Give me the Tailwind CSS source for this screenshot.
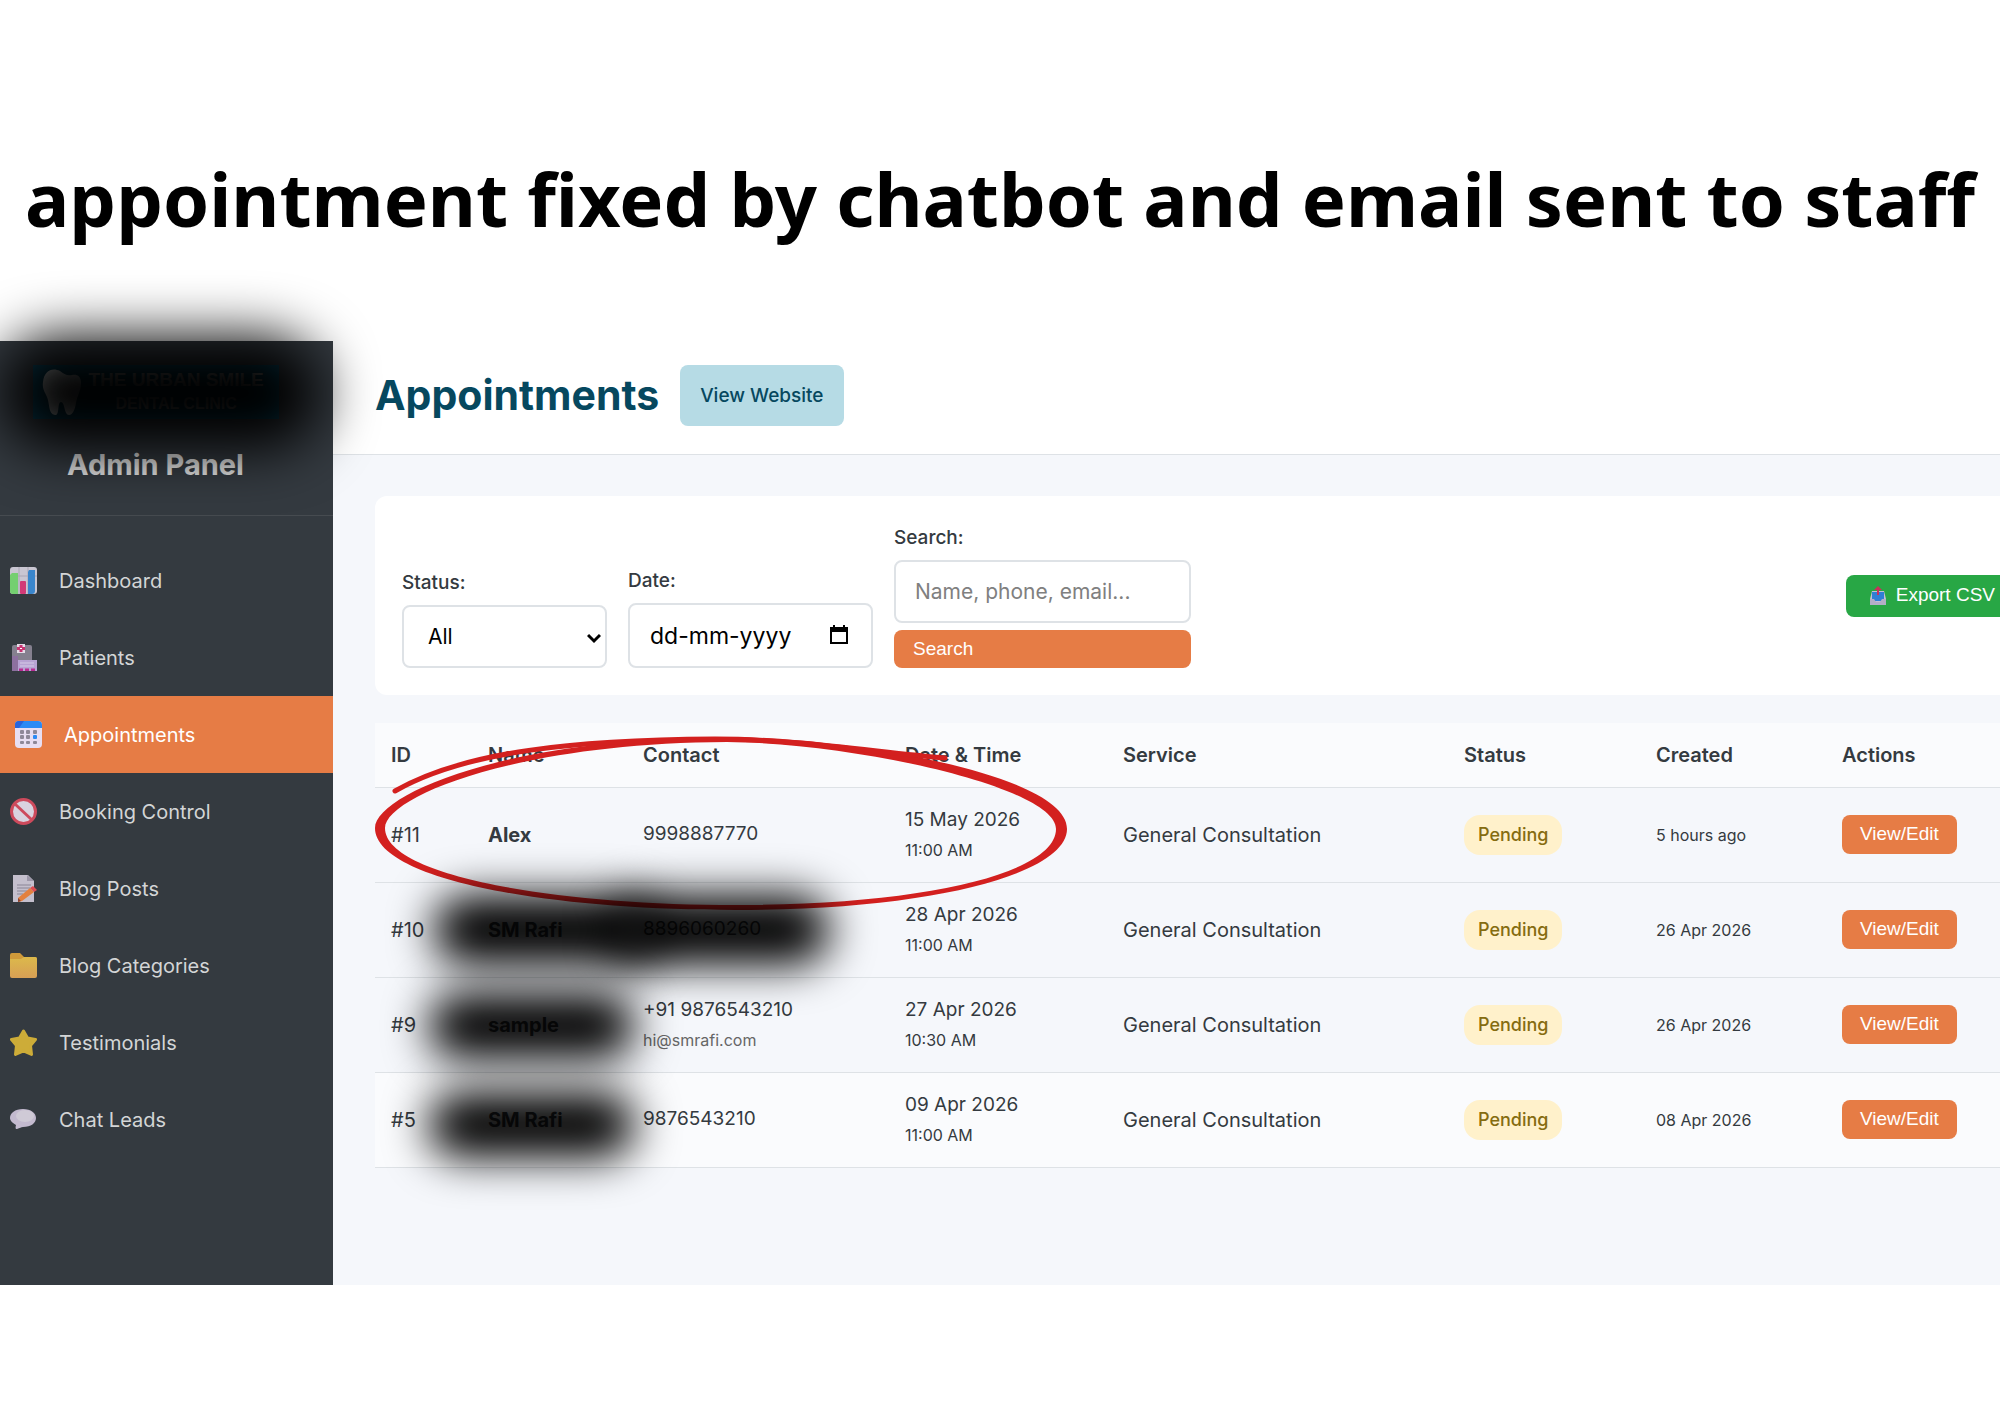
<!DOCTYPE html>
<html lang="en">
<head>
  <meta charset="UTF-8" />
  <meta name="viewport" content="width=device-width, initial-scale=1.0" />
  <title>Admin Panel - Appointments</title>
  <script src="https://cdn.jsdelivr.net/npm/@tailwindcss/browser@4"></script>
</head>
<body class="bg-white font-['Inter',sans-serif] text-xl text-[#343a40] overflow-x-hidden">

  <h1 class="pt-[145px] pb-[88px] text-center text-[74px] leading-[108px] font-bold text-black whitespace-nowrap font-['Noto_Sans',sans-serif]">appointment fixed by chatbot and email sent to staff</h1>

  <div class="relative flex">

    <!-- Sidebar -->
    <aside class="w-[333px] shrink-0 bg-[#343a40] text-[#d3d5d6]">
      <div class="relative h-[175px] pt-6 pr-[22px] border-b border-[#464b50] text-center">
        <div class="mx-auto w-[246px] h-[54px] bg-[#0a4a63] flex items-center gap-2 pl-2 text-[#a8a8a8]">
          <svg class="w-10 h-12" viewBox="0 0 40 48" fill="#dfe6e8">
            <path d="M2 14C3 3 11-1 19 3c4 3 7 5 12 4 5-1 9 1 9 8 0 8-4 13-5 20-1 6-3 12-7 12-5 0-4-13-8-13s-1 14-6 13C7 46 9 36 6 29 4 24 1 21 2 14z" />
          </svg>
          <div class="font-['Liberation_Sans',sans-serif] font-bold text-[19px] leading-6">
            <div>THE URBAN SMILE</div>
            <div class="text-base leading-6">DENTAL CLINIC</div>
          </div>
        </div>
        <h2 class="mt-6 text-[29px] leading-[44px] font-bold text-[#e2e2e2]">Admin Panel</h2>
        <div class="absolute left-0 top-[-4px] w-[320px] h-[112px] rounded-[60px] bg-black blur-[28px]"></div>
      </div>

      <nav class="pt-[26px] pb-[127px]">
        <a href="#" class="flex items-center gap-[22px] h-[77px] pl-[10px]">
          <svg class="w-[27px] h-[27px]" viewBox="0 0 27 27">
            <rect width="27" height="27" rx="3" fill="#c9c6d2" />
            <path d="M9 0v27M18 0v27M0 9h27" stroke="#aaa6b5" />
            <path d="M2 6h6v21H3a3 3 0 0 1-3-3V8z" fill="#74cf70" />
            <rect x="10" y="14" width="6" height="13" rx="1" fill="#d23a77" />
            <path d="M19 3h6v21a3 3 0 0 1-3 3h-4V5z" fill="#3a86cd" />
          </svg>
          Dashboard
        </a>
        <a href="#" class="flex items-center gap-[22px] h-[77px] pl-[10px]">
          <svg class="w-[27px] h-[27px]" viewBox="0 0 27 27">
            <rect x="2" y="1" width="20" height="26" rx="2" fill="#85808f" />
            <rect x="2" y="12" width="6" height="15" fill="#8d709f" />
            <rect x="7" width="8" height="9" fill="#e5dce8" />
            <path d="M11 1v7M7 4.500h8" stroke="#c93372" stroke-width="3" />
            <rect x="10" y="4" width="2" height="1" fill="#fff" />
            <rect x="8" y="16" width="19" height="11" fill="#b8a3d3" />
            <path d="M10 19h14M10 22h14" stroke="#d6cae6" />
            <path d="M9 26h16" stroke="#b72c91" stroke-width="3" stroke-dasharray="4 2" />
          </svg>
          Patients
        </a>
        <a href="#" class="flex items-center gap-[22px] h-[77px] pl-[15px] bg-[#e67c45] text-white">
          <svg class="w-[27px] h-[27px]" viewBox="0 0 27 27">
            <rect width="27" height="27" rx="4" fill="#e7def2" />
            <path d="M0 7V4a4 4 0 0 1 4-4h19a4 4 0 0 1 4 4v3z" fill="#2b8af5" />
            <path d="M0 7V4a4 4 0 0 1 4-4h5L4 7z" fill="#2864dc" />
            <g fill="#8e8899">
              <rect x="5" y="9" width="4" height="4" rx="1" /><rect x="11" y="9" width="4" height="4" rx="1" /><rect x="18" y="9" width="4" height="4" rx="1" />
              <rect x="5" y="14" width="4" height="4" rx="1" /><rect x="11" y="14" width="4" height="4" rx="1" />
              <rect x="5" y="20" width="4" height="3" rx="1" /><rect x="11" y="20" width="4" height="3" rx="1" /><rect x="18" y="20" width="4" height="3" rx="1" />
            </g>
            <rect x="18" y="14" width="4" height="4" rx="1" fill="#2b8af5" />
          </svg>
          Appointments
        </a>
        <a href="#" class="flex items-center gap-[22px] h-[77px] pl-[10px]">
          <svg class="w-[27px] h-[27px]" viewBox="0 0 27 27">
            <circle cx="13.500" cy="13.500" r="12" fill="#d9d3df" stroke="#cd4a5c" stroke-width="3" />
            <path d="M5 6l17 16" stroke="#cd4a5c" stroke-width="3" />
          </svg>
          Booking Control
        </a>
        <a href="#" class="flex items-center gap-[22px] h-[77px] pl-[10px]">
          <svg class="w-[27px] h-[27px]" viewBox="0 0 27 27">
            <path d="M3 0h15l6 6v21H3z" fill="#c4bfcd" />
            <path d="M17 0l7 6h-7z" fill="#9c96a8" />
            <path d="M7 10h14M7 13h13M7 16h10M7 19h6" stroke="#8a8596" />
            <path d="M8 23L20 13l4 4-12 9-4 1z" fill="#e3803f" />
            <path d="M20 13l3-2 4 4-3 2z" fill="#dc4d52" />
            <path d="M8 23l3 3-3 1z" fill="#8a4432" />
          </svg>
          Blog Posts
        </a>
        <a href="#" class="flex items-center gap-[22px] h-[77px] pl-[10px]">
          <svg class="w-[27px] h-[27px]" viewBox="0 0 27 27">
            <defs>
              <linearGradient id="folder" x1="0" y1="0" x2="0" y2="1">
                <stop offset="0" stop-color="#dcb94b" />
                <stop offset="1" stop-color="#d79f55" />
              </linearGradient>
            </defs>
            <path d="M0 3a2 2 0 0 1 2-2h8l4 4h11a2 2 0 0 1 2 2v4H0z" fill="#d09a3a" />
            <path d="M0 7h11l3-2h11a2 2 0 0 1 2 2v17a2 2 0 0 1-2 2H2a2 2 0 0 1-2-2z" fill="url(#folder)" />
          </svg>
          Blog Categories
        </a>
        <a href="#" class="flex items-center gap-[22px] h-[77px] pl-[10px]">
          <svg class="w-[27px] h-[27px]" viewBox="0 0 27 27">
            <path d="M13.500 2l4 7 8 1.500-5 6 1 9-8-3.500-8 3.500 1-9-5-6 8-1.500z" fill="#cdac38" stroke="#cdac38" stroke-width="3" stroke-linejoin="round" />
          </svg>
          Testimonials
        </a>
        <a href="#" class="flex items-center gap-[22px] h-[77px] pl-[10px]">
          <svg class="w-[27px] h-[27px]" viewBox="0 0 27 27">
            <path d="M13 3c8 0 13 4 13 9s-5 9-13 9c-2 0-3 1-6 2-1 0-2 0-1-4-3-2-6-4-6-7 0-5 5-9 13-9z" fill="#c3bacf" />
            <ellipse cx="15" cy="10" rx="9" ry="6" fill="#cfcad6" />
          </svg>
          Chat Leads
        </a>
      </nav>
    </aside>

    <!-- Main -->
    <main class="flex-1 min-w-0 bg-[#f5f7fb]">
      <header class="flex items-center gap-[21px] h-[114px] pl-[42px] pb-1 bg-white border-b border-[#dee2e6]">
        <h2 class="text-[41px] font-bold text-[#06485f]">Appointments</h2>
        <a href="#" class="rounded-lg bg-[#b6dbe5] px-5 py-4 text-[19px] leading-[29px] font-medium text-[#06485f]">View Website</a>
      </header>

      <div class="pt-[41px] pl-[42px]">

        <!-- Filters -->
        <form class="flex items-end gap-[21px] rounded-l-xl bg-white py-[27px] pl-[27px]">
          <div>
            <label for="status" class="block mb-[7px] text-[19px] leading-[30px] font-medium">Status:</label>
            <div class="relative">
              <select id="status" name="status" class="appearance-none w-[205px] h-[63px] rounded-lg border-2 border-[#dee2e6] bg-white pl-6 text-[21px] text-black">
                <option>All</option>
                <option>Pending</option>
              </select>
              <svg class="absolute right-[6px] top-[26px] w-[14px] h-[14px]" viewBox="0 0 14 14" fill="none" stroke="#000" stroke-width="3">
                <path d="M1 4l6 6 6-6" />
              </svg>
            </div>
          </div>
          <div>
            <label for="date" class="block mb-[7px] text-[19px] leading-[30px] font-medium">Date:</label>
            <div class="relative">
              <input id="date" name="date" type="text" placeholder="dd-mm-yyyy" class="w-[245px] h-[65px] rounded-lg border-2 border-[#dee2e6] bg-white pl-5 text-[23px] text-black placeholder:text-black" />
              <svg class="absolute right-[25px] top-[22px] w-[18px] h-[19px]" viewBox="0 0 18 19">
                <path d="M1 3h16v15H1z" fill="none" stroke="#000" stroke-width="2" />
                <path d="M1 2h16v5H1zM3 0h2v3H3zM13 0h2v3h-2z" />
              </svg>
            </div>
          </div>
          <div class="w-[297px]">
            <label for="search" class="block mb-[7px] text-[19px] leading-[30px] font-medium">Search:</label>
            <input id="search" name="search" type="text" placeholder="Name, phone, email..." class="block w-full h-[63px] rounded-lg border-2 border-[#dee2e6] bg-white pl-[19px] text-[21px] placeholder:text-[#808080]" />
            <button type="submit" class="mt-[7px] block w-full h-[38px] rounded-lg bg-[#e67c45] pl-[19px] text-left text-[19px] text-white font-['Liberation_Sans',sans-serif]">Search</button>
          </div>
          <button type="button" class="ml-auto self-center flex items-center gap-[10px] h-[42px] rounded-l-lg bg-[#28a745] pl-6 pr-[5px] text-[19px] text-white font-['Liberation_Sans',sans-serif]">
            <svg class="w-4 h-[19px]" viewBox="0 0 16 19">
              <path d="M2 5h12l2 8v6H0v-6z" fill="#c3bfd4" />
              <path d="M2 6h12v9H2z" fill="#2f7fd6" />
              <path d="M0 13h4l2 3h4l2-3h4v6H0z" fill="#b3aec6" />
              <path d="M7 9V4H4l4-4 4 4H9v5z" fill="#c9305c" />
            </svg>
            Export CSV
          </button>
        </form>

        <!-- Appointments table -->
        <div class="relative mt-7">
          <table class="w-full table-fixed text-left">
            <thead>
              <tr class="h-[64px] bg-[#fafbfd] border-b border-[#dee2e6]">
                <th class="w-[97px] pl-4 font-semibold">ID</th>
                <th class="w-[155px] pl-4 font-semibold">Name</th>
                <th class="w-[262px] pl-4 font-semibold">Contact</th>
                <th class="w-[218px] pl-4 font-semibold">Date &amp; Time</th>
                <th class="w-[341px] pl-4 font-semibold">Service</th>
                <th class="w-[192px] pl-4 font-semibold">Status</th>
                <th class="w-[186px] pl-4 font-semibold">Created</th>
                <th class="pl-4 font-semibold">Actions</th>
              </tr>
            </thead>
            <tbody>
              <tr class="h-[95px] border-b border-[#dee2e6]">
                <td class="pl-4">#11</td>
                <td class="pl-4 font-bold">Alex</td>
                <td class="pl-4 text-[19px]">9998887770</td>
                <td class="pl-4 text-[19px] leading-[31px]">15 May 2026<div class="text-base leading-[31px]">11:00 AM</div></td>
                <td class="pl-4">General Consultation</td>
                <td class="pl-4"><span class="inline-block rounded-2xl bg-[#fff1cb] px-[14px] text-lg leading-10 font-medium text-[#856c10]">Pending</span></td>
                <td class="pl-4 text-base">5 hours ago</td>
                <td class="pl-4"><button type="button" class="block h-[39px] rounded-lg bg-[#e67c45] px-[18px] text-[19px] text-white font-['Liberation_Sans',sans-serif]">View/Edit</button></td>
              </tr>
              <tr class="h-[95px] border-b border-[#dee2e6]">
                <td class="pl-4">#10</td>
                <td class="pl-4 font-bold">SM Rafi</td>
                <td class="pl-4 text-[19px]">8896060260</td>
                <td class="pl-4 text-[19px] leading-[31px]">28 Apr 2026<div class="text-base leading-[31px]">11:00 AM</div></td>
                <td class="pl-4">General Consultation</td>
                <td class="pl-4"><span class="inline-block rounded-2xl bg-[#fff1cb] px-[14px] text-lg leading-10 font-medium text-[#856c10]">Pending</span></td>
                <td class="pl-4 text-base">26 Apr 2026</td>
                <td class="pl-4"><button type="button" class="block h-[39px] rounded-lg bg-[#e67c45] px-[18px] text-[19px] text-white font-['Liberation_Sans',sans-serif]">View/Edit</button></td>
              </tr>
              <tr class="h-[95px] border-b border-[#dee2e6]">
                <td class="pl-4">#9</td>
                <td class="pl-4 font-bold">sample</td>
                <td class="pl-4 text-[19px] leading-[31px]">+91 9876543210<div class="text-base leading-[31px] text-[#666666]">hi@smrafi.com</div></td>
                <td class="pl-4 text-[19px] leading-[31px]">27 Apr 2026<div class="text-base leading-[31px]">10:30 AM</div></td>
                <td class="pl-4">General Consultation</td>
                <td class="pl-4"><span class="inline-block rounded-2xl bg-[#fff1cb] px-[14px] text-lg leading-10 font-medium text-[#856c10]">Pending</span></td>
                <td class="pl-4 text-base">26 Apr 2026</td>
                <td class="pl-4"><button type="button" class="block h-[39px] rounded-lg bg-[#e67c45] px-[18px] text-[19px] text-white font-['Liberation_Sans',sans-serif]">View/Edit</button></td>
              </tr>
              <tr class="h-[95px] bg-[#fafbfd] border-b border-[#dee2e6]">
                <td class="pl-4">#5</td>
                <td class="pl-4 font-bold">SM Rafi</td>
                <td class="pl-4 text-[19px]">9876543210</td>
                <td class="pl-4 text-[19px] leading-[31px]">09 Apr 2026<div class="text-base leading-[31px]">11:00 AM</div></td>
                <td class="pl-4">General Consultation</td>
                <td class="pl-4"><span class="inline-block rounded-2xl bg-[#fff1cb] px-[14px] text-lg leading-10 font-medium text-[#856c10]">Pending</span></td>
                <td class="pl-4 text-base">08 Apr 2026</td>
                <td class="pl-4"><button type="button" class="block h-[39px] rounded-lg bg-[#e67c45] px-[18px] text-[19px] text-white font-['Liberation_Sans',sans-serif]">View/Edit</button></td>
              </tr>
            </tbody>
          </table>

          <!-- Hand-drawn highlight around the newest row -->
          <svg class="absolute left-0 top-0 w-[700px] h-[190px] pointer-events-none" viewBox="0 0 700 190">
            <path fill="#d3201f" fill-rule="evenodd" d="M0 105C0 72 130 15 352 14C480 15 692 52 692 106C692 150 560 187 361 187C165 187 0 155 0 105ZM10 105C10 152 175 182 361 182C550 182 681 150 681 106C681 64 480 20 352 19C140 20 10 74 10 105Z" />
            <path fill="none" stroke="#d3201f" stroke-width="5" stroke-linecap="round" d="M20 68C90 28 200 17 340 16C420 16 500 29 570 35" />
          </svg>

          <!-- Redacted customer details -->
          <div class="absolute left-[58px] top-[172px] w-[225px] h-[70px] rounded-full bg-black blur-[22px]"></div>
          <div class="absolute left-[235px] top-[172px] w-[220px] h-[70px] rounded-full bg-black blur-[22px]"></div>
          <div class="absolute left-[53px] top-[270px] w-[207px] h-[66px] rounded-full bg-black blur-[22px]"></div>
          <div class="absolute left-[53px] top-[369px] w-[207px] h-[66px] rounded-full bg-black blur-[22px]"></div>
        </div>
      </div>
    </main>
  </div>

</body>
</html>
